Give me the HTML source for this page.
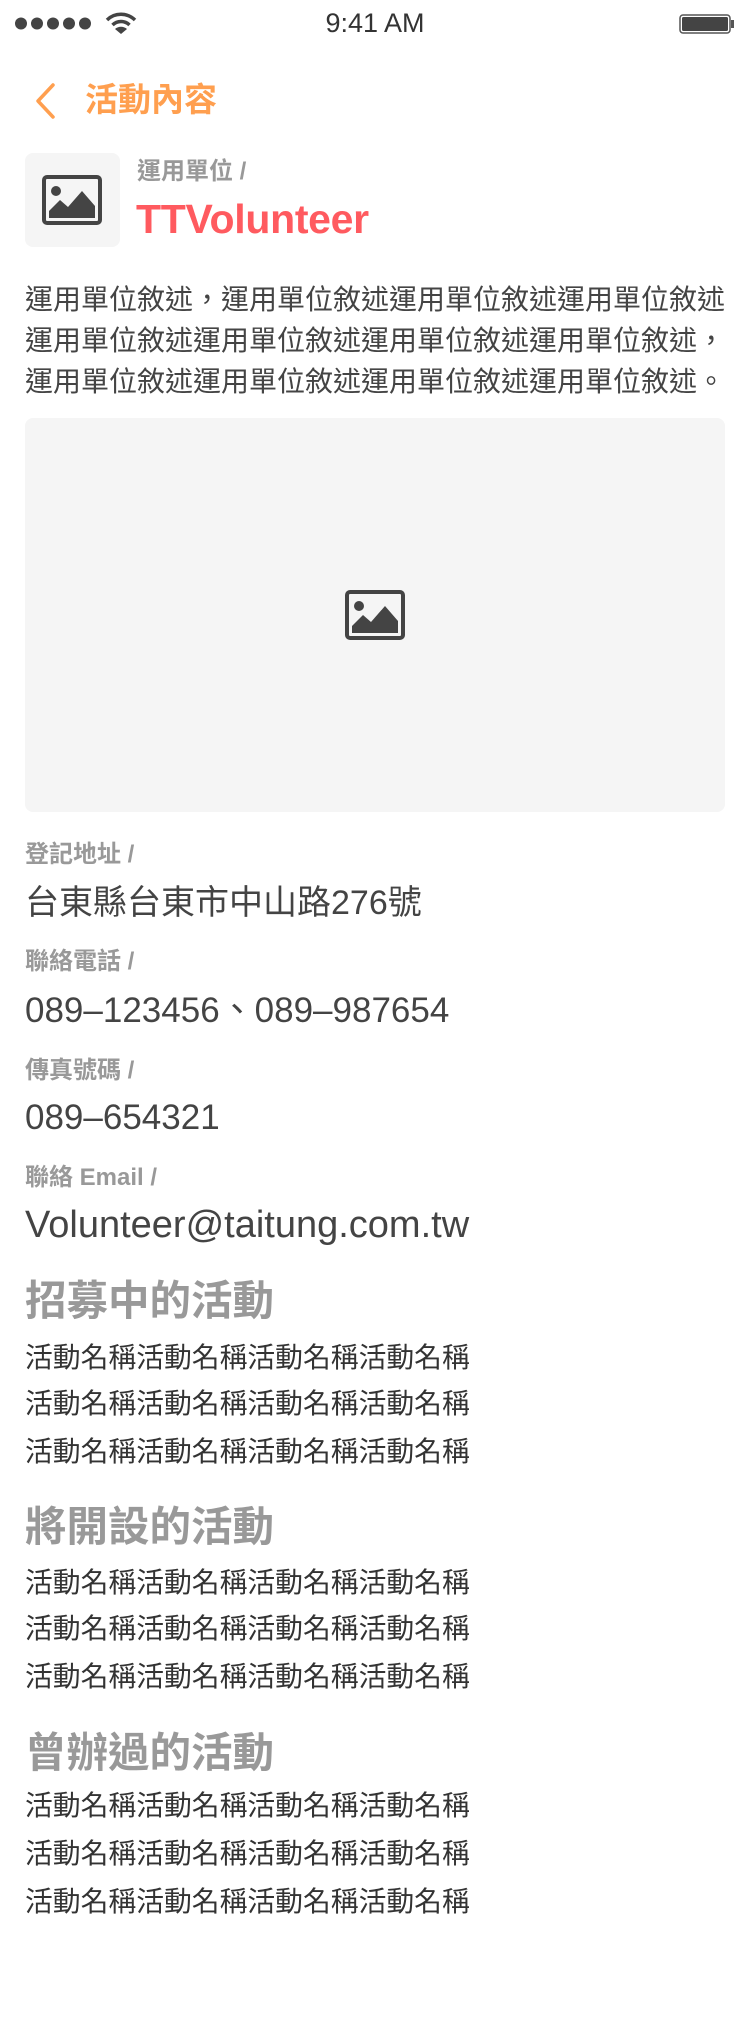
<!DOCTYPE html>
<html><head><meta charset="utf-8">
<style>
*{margin:0;padding:0;box-sizing:border-box}
body{width:750px;height:2028px;background:#fff;position:relative;font-family:"Liberation Sans","Noto Sans CJK TC",sans-serif;overflow:hidden}
.a{position:absolute;white-space:nowrap;line-height:1}
.lab{font-size:24px;color:#999;font-weight:bold;left:25px}
.val{font-size:34px;color:#444;left:25px}
.h{font-size:41.5px;color:#999;font-weight:bold;left:25px}
.it{font-size:27.8px;color:#333;left:25px}
</style></head><body>
<div class="a" style="left:15px;top:17px;">
<svg width="80" height="13"><g fill="#444"><circle cx="6" cy="6.5" r="6"/><circle cx="22" cy="6.5" r="6"/><circle cx="38" cy="6.5" r="6"/><circle cx="54" cy="6.5" r="6"/><circle cx="70" cy="6.5" r="6"/></g></svg></div>
<svg class="a" style="left:105px;top:12px" width="32" height="22" viewBox="0 0 32 22"><path d="M2 8 A20 20 0 0 1 30 8" stroke="#444" stroke-width="3.5" fill="none"/><path d="M7.5 13 A12 12 0 0 1 24.5 13" stroke="#444" stroke-width="3.5" fill="none"/><path d="M10 17 L16 22 L22 17 A9 9 0 0 0 10 17Z" fill="#444"/></svg>
<div class="a" style="left:0;width:750px;text-align:center;top:10px;font-size:27px;color:#333">9:41 AM</div>
<svg class="a" style="left:679px;top:14px" width="56" height="20"><rect x="1" y="1" width="50" height="18" rx="3" fill="#fff" stroke="#555" stroke-width="1.5"/><rect x="3" y="3" width="46" height="14" rx="1.5" fill="#444"/><rect x="52" y="6" width="3" height="8" fill="#555"/></svg>
<svg class="a" style="left:33px;top:82px" width="24" height="38"><path d="M20 3 L5 19 L20 35" stroke="#FF9F4F" stroke-width="3.5" fill="none" stroke-linecap="round" stroke-linejoin="round"/></svg>
<div class="a" style="left:85px;top:83px;font-size:33px;color:#FF9F4F;font-weight:bold">活動內容</div>
<div class="a" style="left:25px;top:153px;width:95px;height:94px;background:#f5f5f5;border-radius:8px"></div>
<svg class="a" style="left:42px;top:175px" width="60" height="50" viewBox="0 0 60 50"><rect x="2" y="2" width="56" height="46" rx="3" fill="none" stroke="#444" stroke-width="4"/><circle cx="14" cy="16" r="5" fill="#444"/><path d="M7 43 L7 36 L18 25 L26 32 L40 16 L53 31 L53 43Z" fill="#444"/></svg>
<div class="a" style="left:137px;top:160px;font-size:24px;color:#999;font-weight:bold">運用單位 /</div>
<div class="a" style="left:136px;top:199px;font-size:41px;color:#FF5A5F;font-weight:bold;letter-spacing:-0.3px">TTVolunteer</div>
<div class="a" style="left:25px;top:279px;font-size:28px;color:#444;line-height:41px;white-space:normal;width:720px">運用單位敘述，運用單位敘述運用單位敘述運用單位敘述<br>運用單位敘述運用單位敘述運用單位敘述運用單位敘述，<br>運用單位敘述運用單位敘述運用單位敘述運用單位敘述。</div>
<div class="a" style="left:25px;top:418px;width:700px;height:394px;background:#f5f5f5;border-radius:8px"></div>
<svg class="a" style="left:345px;top:590px" width="60" height="50" viewBox="0 0 60 50"><rect x="2" y="2" width="56" height="46" rx="3" fill="none" stroke="#444" stroke-width="4"/><circle cx="14" cy="16" r="5" fill="#444"/><path d="M7 43 L7 36 L18 25 L26 32 L40 16 L53 31 L53 43Z" fill="#444"/></svg>
<div class="a lab" style="top:843px">登記地址 /</div>
<div class="a val" style="top:886px">台東縣台東市中山路276號</div>
<div class="a lab" style="top:950px">聯絡電話 /</div>
<div class="a val" style="top:993px;font-size:35px">089–123456、089–987654</div>
<div class="a lab" style="top:1059px">傳真號碼 /</div>
<div class="a val" style="top:1100px;font-size:35px">089–654321</div>
<div class="a lab" style="top:1166px">聯絡 Email /</div>
<div class="a val" style="top:1206px;font-size:38px">Volunteer@taitung.com.tw</div>
<div class="a h" style="top:1280px">招募中的活動</div>
<div class="a it" style="top:1344px">活動名稱活動名稱活動名稱活動名稱</div>
<div class="a it" style="top:1390px">活動名稱活動名稱活動名稱活動名稱</div>
<div class="a it" style="top:1438px">活動名稱活動名稱活動名稱活動名稱</div>
<div class="a h" style="top:1506px">將開設的活動</div>
<div class="a it" style="top:1569px">活動名稱活動名稱活動名稱活動名稱</div>
<div class="a it" style="top:1615px">活動名稱活動名稱活動名稱活動名稱</div>
<div class="a it" style="top:1663px">活動名稱活動名稱活動名稱活動名稱</div>
<div class="a h" style="top:1732px">曾辦過的活動</div>
<div class="a it" style="top:1792px">活動名稱活動名稱活動名稱活動名稱</div>
<div class="a it" style="top:1840px">活動名稱活動名稱活動名稱活動名稱</div>
<div class="a it" style="top:1888px">活動名稱活動名稱活動名稱活動名稱</div>
</body></html>
